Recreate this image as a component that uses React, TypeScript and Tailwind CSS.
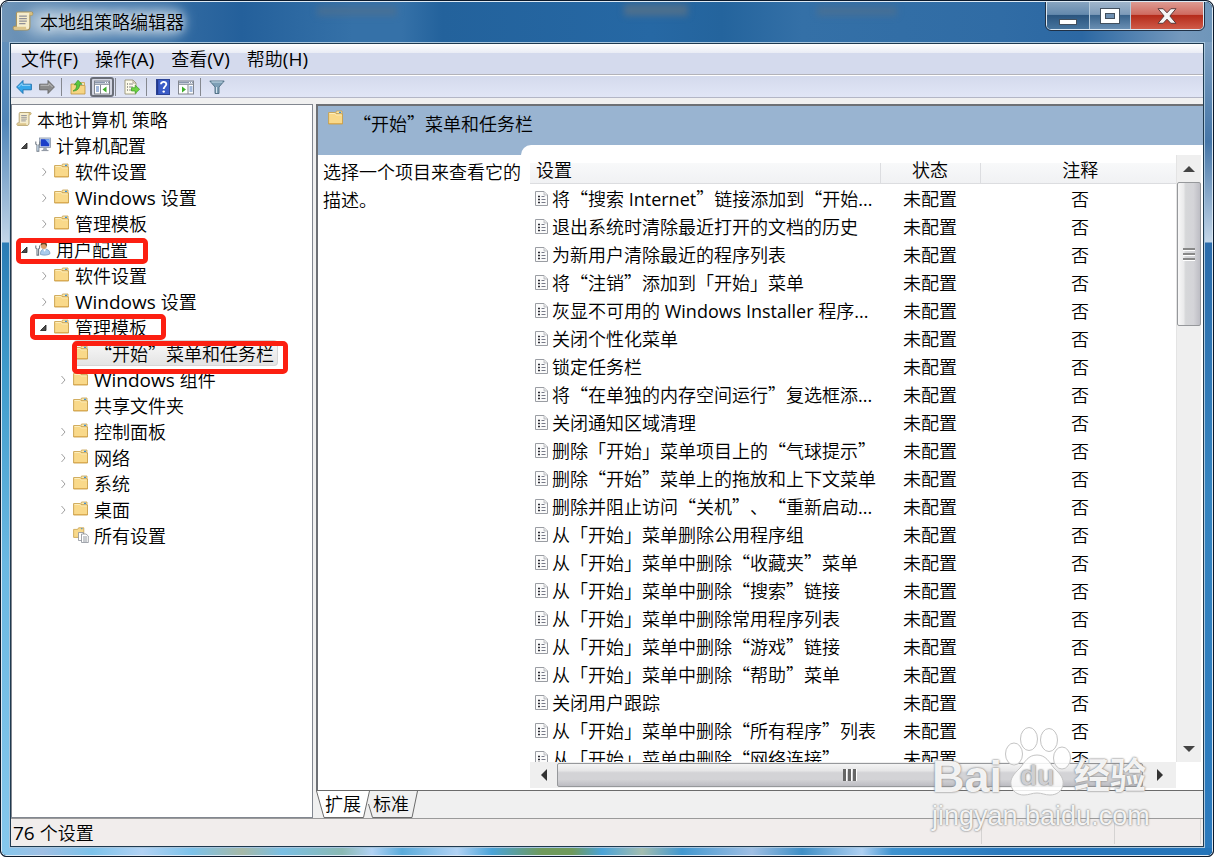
import type { ReactNode } from "react";
import clsx from "clsx";

const settings = [
  "将“搜索 Internet”链接添加到“开始...",
  "退出系统时清除最近打开的文档的历史",
  "为新用户清除最近的程序列表",
  "将“注销”添加到「开始」菜单",
  "灰显不可用的 Windows Installer 程序...",
  "关闭个性化菜单",
  "锁定任务栏",
  "将“在单独的内存空间运行”复选框添...",
  "关闭通知区域清理",
  "删除「开始」菜单项目上的“气球提示”",
  "删除“开始”菜单上的拖放和上下文菜单",
  "删除并阻止访问“关机”、“重新启动...",
  "从「开始」菜单删除公用程序组",
  "从「开始」菜单中删除“收藏夹”菜单",
  "从「开始」菜单中删除“搜索”链接",
  "从「开始」菜单中删除常用程序列表",
  "从「开始」菜单中删除“游戏”链接",
  "从「开始」菜单中删除“帮助”菜单",
  "关闭用户跟踪",
  "从「开始」菜单中删除“所有程序”列表",
  "从「开始」菜单中删除“网络连接”",
];

type Node = {
  label: string;
  icon?: "computer" | "user" | "all";
  arrow?: "open" | "closed";
  selected?: boolean;
  mark?: string;
  children?: Node[];
};

const tree: Node[] = [
  {
    label: "计算机配置",
    icon: "computer",
    arrow: "open",
    children: [
      { label: "软件设置", arrow: "closed" },
      { label: "Windows 设置", arrow: "closed" },
      { label: "管理模板", arrow: "closed" },
    ],
  },
  {
    label: "用户配置",
    icon: "user",
    arrow: "open",
    mark: "left-0 top-0.5 w-[132px] h-[26px]",
    children: [
      { label: "软件设置", arrow: "closed" },
      { label: "Windows 设置", arrow: "closed" },
      {
        label: "管理模板",
        arrow: "open",
        mark: "-left-[5px] top-0 w-[136px] h-[26px]",
        children: [
          { label: "“开始”菜单和任务栏", selected: true, mark: "left-[18px] top-px w-[216px] h-[33px]" },
          { label: "Windows 组件", arrow: "closed" },
          { label: "共享文件夹" },
          { label: "控制面板", arrow: "closed" },
          { label: "网络", arrow: "closed" },
          { label: "系统", arrow: "closed" },
          { label: "桌面", arrow: "closed" },
          { label: "所有设置", icon: "all" },
        ],
      },
    ],
  },
];

// Latin runs use a wider face than the one bundled with the CJK font
function Mixed({ text, large }: { text: string; large?: boolean }) {
  return (
    <span className="whitespace-pre">
      {text.split(/([A-Za-z0-9(). ]+)/).map((part, i) =>
        i % 2 ? (
          <span key={i} className={clsx("font-['Open_Sans','Noto_Sans',sans-serif] leading-none font-normal", large && "text-[19px]")}>
            {part}
          </span>
        ) : (
          part
        )
      )}
    </span>
  );
}

function ScrollIcon({ className }: { className?: string }) {
  return (
    <svg viewBox="0 0 16 16" className={clsx("shrink-0", className)}>
      <path d="M4 1.5h10.2c1.2 0 1.2 2.2 0 2.2H13V12c0 1.5-.6 2.5-2 2.5H2c-1.4 0-1.6-2.6 0-2.6h1.2V3c0-.8.2-1.5.8-1.5z" fill="#f6edcc" stroke="#a8935c" strokeWidth=".8" />
      <path d="M12.6 2v1.8h1.9c.8-.4.6-1.6-.3-1.8z" fill="#d9bf7c" />
      <path d="M2 12.2h8.3c-.3 1 .1 1.8.7 2H2c-1-.2-1-1.8 0-2z" fill="#dcc58c" />
      <path d="M5.2 4.5h5.6M5.2 6.3h5.6M5.2 8.1h5.6M5.2 9.9h4.6" stroke="#8f8f96" strokeWidth=".9" />
    </svg>
  );
}

function FolderIcon() {
  return (
    <svg viewBox="0 0 16 16" className="h-4 w-4 shrink-0">
      <path d="M7.500 3.500L8.500 1H14v3z" fill="#fbe9ae" stroke="#c79f4b" strokeWidth=".8" />
      <path d="M11 2.400h2" stroke="#3f8fd8" strokeWidth="1.200" />
      <path d="M.6 2.600h6.600l1.400 1.400h5.900v10H.6z" fill="#f9d98a" stroke="#c79f4b" strokeWidth=".9" />
      <path d="M1.400 3.500h5.500l1.400 1.400h5.400" stroke="#fdf0c4" strokeWidth=".9" fill="none" />
      <path d="M1 13.500h13.200" stroke="#dba94f" strokeWidth=".9" />
    </svg>
  );
}

function ComputerIcon() {
  return (
    <svg viewBox="0 0 16 16" className="h-4 w-4 shrink-0">
      <rect x="4.500" y="1" width="11" height="9.500" fill="#d9e0ea" stroke="#8492a6" strokeWidth=".8" />
      <rect x="5.700" y="2.200" width="8.600" height="7.100" fill="#1b3fc9" />
      <path d="M10 2.200h4.300v5z" fill="#7fb1f2" />
      <path d="M8.500 11h3l.8 2.200H7.600z" fill="#a3abb8" />
      <path d="M6.500 13.600h7" stroke="#8b929e" />
      <path d="M.8 4.500v2.600l1.200 1v6h1.800v-6l1-1V4.500" fill="none" stroke="#6e7884" strokeWidth="1.100" />
      <path d="M2.900 8.400v5.400" stroke="#b9d2e8" />
    </svg>
  );
}

function UserIcon() {
  return (
    <svg viewBox="0 0 16 16" className="h-4 w-4 shrink-0">
      <path d="M5.500 13.500c-.3-3.400 1.200-5.400 4.200-5.400 3.400 0 5.300 2 5.300 4.600-2 1.700-6.500 1.800-9.500.8z" fill="#a9cbec" stroke="#6f93b8" strokeWidth=".7" />
      <path d="M8 8.300l1.600 2.500 1.600-2.500z" fill="#fff" />
      <circle cx="8.800" cy="5" r="3" fill="#d9a06e" />
      <path d="M5.600 4.800C5.300 2 7.300.9 9.200 1c2 .1 3.200 1.800 2.700 4.200-.7 1-.9-1.500-2.200-1.900-1.700-.3-3 .1-4.100 1.500z" fill="#6a4326" />
      <path d="M.8 4.500v2.600l1.200 1v6h1.600v-6l1-1V4.500" fill="none" stroke="#6e7884" strokeWidth="1.100" />
    </svg>
  );
}

function AllIcon() {
  return (
    <svg viewBox="0 0 16 16" className="h-4 w-4 shrink-0">
      <path d="M.6 2.400h4l1-1.600h5.200v9.600H.6z" fill="#f8d98b" stroke="#c79f4b" strokeWidth=".8" />
      <path d="M8 1.700h1.500" stroke="#3f8fd8" />
      <path d="M5.500 5.500h5v8h-5z" fill="#fff" stroke="#8a8f98" strokeWidth=".8" />
      <path d="M8.500 7h4.500l2.300 2v6.500H8.500z" fill="#fff" stroke="#8a8f98" strokeWidth=".8" />
      <path d="M10 10h4M10 12h4M10 14h4" stroke="#777d88" strokeWidth=".8" />
    </svg>
  );
}

function DocIcon() {
  return (
    <svg viewBox="0 0 13 16" className="h-4 w-[13px] shrink-0">
      <path d="M.5 1.500h8.500l3.500 3.500v10.500H.5z" fill="#fbfbfb" stroke="#9a9da3" />
      <path d="M9 1.500V5h3.500" fill="#e8e8ea" stroke="#b1b4b9" strokeWidth=".8" />
      <path d="M3 6.500h2M3 9.500h2M3 12.500h2" stroke="#2b2b33" strokeWidth="1.600" />
      <path d="M6.500 6.500h3M6.500 9.500h4M6.500 12.500h4" stroke="#777a88" />
    </svg>
  );
}

function Arrow({ kind }: { kind?: "open" | "closed" }) {
  return (
    <svg viewBox="0 0 19 16" className="h-4 w-[19px] shrink-0">
      {kind === "open" && <path d="M11 6v5.500H5.500z" fill="#4a4a4a" stroke="#1e1e1e" strokeWidth=".8" />}
      {kind === "closed" && <path d="M7.500 5l3.500 4-3.500 4" fill="none" stroke="#a0a0a0" />}
    </svg>
  );
}

function TreeItem({ node }: { node: Node }) {
  return (
    <li>
      <div className="relative flex h-[26px] items-center">
        <Arrow kind={node.arrow} />
        <div
          className={clsx(
            "flex h-full items-center gap-[5px]",
            node.selected &&
              "rounded-sm bg-linear-to-b from-[#fafafa] to-[#e3e3e3] pr-1 outline outline-[#d6d6d6] -outline-offset-1"
          )}
        >
          {node.icon === "computer" ? <ComputerIcon /> : node.icon === "user" ? <UserIcon /> : node.icon === "all" ? <AllIcon /> : <FolderIcon />}
          <Mixed text={node.label} large />
        </div>
        {node.mark && <div className={clsx("absolute z-10 rounded-[5px] border-5 border-[#fc1f11]", node.mark)} />}
      </div>
      {node.children && (
        <ul className="pl-[19px]">
          {node.children.map((child, i) => (
            <TreeItem key={i} node={child} />
          ))}
        </ul>
      )}
    </li>
  );
}

function Separator() {
  return <div className="mr-2 ml-1.5 h-[18px] w-px bg-[#85888f]" />;
}

function ToolButton({ label, className, children }: { label: string; className?: string; children: ReactNode }) {
  return (
    <button aria-label={label} className={clsx("flex items-center justify-center", className)}>
      <svg viewBox="0 0 16 16" className="h-4 w-4">
        {children}
      </svg>
    </button>
  );
}

function PaneShape({ flip }: { flip?: boolean }) {
  return (
    <>
      <rect x=".5" y="2" width="15" height="13" fill="#fff" stroke="#83878f" />
      <path d="M1 3.500h14" stroke="#8b97ad" strokeWidth="2" />
      <path d="M11 3.500h1M13 3.500h1" stroke="#fff" />
      <path d="M1 5.500h14" stroke="#9aa0aa" />
      <path d={flip ? "M10 6v9" : "M6.500 6v9"} stroke="#83878f" />
      <path d={flip ? "M11.500 8h3M11.500 10h3M11.500 12h3" : "M2 8h3M2 10h3M2 12h3"} stroke="#4673b8" />
      <path d={flip ? "M4 7.500l4 3-4 3z" : "M12.500 7.500l-4 3 4 3z"} fill="#3fae2a" />
    </>
  );
}

function Toolbar() {
  return (
    <div className="flex h-[22px] items-center border-b border-[#b3b6c6] bg-linear-to-b from-[#d4daed] to-[#e1e6f6] pl-[5px]">
      <ToolButton label="后退">
        <path d="M.6 8l6.400-6.500v3.700h8.400v5.600H7v3.700z" fill="#35a7ea" stroke="#1c6fae" strokeWidth=".9" />
        <path d="M2.500 8l3.500-3.500v1.800h8.300" fill="none" stroke="#a5dcfa" strokeWidth=".9" />
      </ToolButton>
      <ToolButton label="前进" className="ml-[7px]">
        <path d="M15.400 8l-6.400-6.500v3.700H.6v5.600H9v3.700z" fill="#8b8b8b" stroke="#636363" strokeWidth=".9" />
        <path d="M1.500 6.300h8.500V4.500l3.500 3.500" fill="none" stroke="#c2c2c2" strokeWidth=".9" />
      </ToolButton>
      <Separator />
      <ToolButton label="上一级">
        <path d="M1 5h5l1.500 1.500H15V15H1z" fill="#f6d583" stroke="#bf9640" strokeWidth=".8" />
        <path d="M10 3.500h4.500v3" fill="#fbe9ae" stroke="#c79f4b" strokeWidth=".8" />
        <path d="M3 12c2.500-1 3.800-3.200 3.700-6.200H4.400L8 1.200l4 4.100H9.600C9.700 9.500 7 12 3 12z" fill="#5cc93e" stroke="#32902a" strokeWidth=".7" />
      </ToolButton>
      <ToolButton label="显示/隐藏控制台树" className="-mr-[5px] ml-1 h-5 w-6 rounded-[3px] border-2 border-[#6a6e78] bg-[#d3d6e2]">
        <PaneShape />
      </ToolButton>
      <Separator />
      <ToolButton label="导出列表">
        <path d="M1 1h8l3 3v11H1z" fill="#fdfbea" stroke="#9a9578" strokeWidth=".9" />
        <path d="M9 1v3h3" fill="none" stroke="#9a9578" strokeWidth=".8" />
        <path d="M3 5h1M3 8h1M3 11h1" stroke="#444" strokeWidth="1.200" />
        <path d="M5 5h4M5 8h4M5 11h3" stroke="#8b8b8b" />
        <path d="M7.500 8.700h3.700V6.200l4.400 4.100-4.400 4.200V12H7.500z" fill="#6fd443" stroke="#3b9c27" strokeWidth=".7" />
      </ToolButton>
      <Separator />
      <ToolButton label="帮助">
        <rect x="1.500" y=".5" width="13" height="15" fill="#3a5bc7" stroke="#2b4396" />
        <path d="M2.500 1v14" stroke="#24398a" strokeWidth="1.500" />
        <path d="M6 5.200c0-3.300 5.500-3 5.300.1-.1 2-2.600 2.200-2.600 4.700" fill="none" stroke="#fff" strokeWidth="1.900" />
        <circle cx="8.700" cy="12.600" r="1.200" fill="#fff" />
      </ToolButton>
      <ToolButton label="显示/隐藏操作窗格" className="ml-[7px]">
        <PaneShape flip />
      </ToolButton>
      <Separator />
      <ToolButton label="筛选器">
        <path d="M.8 2h14.400L10 8v6.500H6V8z" fill="#7d9fb6" stroke="#4c6b80" strokeWidth=".9" />
        <path d="M2.500 3h11" stroke="#c6dbe8" strokeWidth="1.200" />
        <path d="M7.500 8v6" stroke="#d4e4ee" />
      </ToolButton>
    </div>
  );
}

function TitleBar() {
  return (
    <div className="relative flex h-10 shrink-0 items-start justify-between overflow-hidden bg-[linear-gradient(to_right,#7095b8_0px,#3f74a8_110px,#24609b_240px,#3571a8_350px,#3571a8_400px,#23629c_440px,#2668a4_650px,#24649d_720px,#3470a7_800px,#306ca5_1000px,#2c68a3_1080px,#7599bd_1180px,#6f96ba_100%)]">
      <div className="absolute top-1 left-[315px] h-2.5 w-20 bg-[#526f8c]/60 blur-[3px]" />
      <div className="absolute top-0.5 left-[622px] h-3 w-16 bg-[#5d7285]/70 blur-[3px]" />
      <div className="absolute top-1 left-[815px] h-2.5 w-20 bg-[#526f8c]/60 blur-[3px]" />
      <div className="relative flex h-full items-center gap-1.5 pb-0.5 pl-2.5">
        <div className="absolute inset-y-1.5 right-0 left-6 rounded-full bg-[#c9d8e6]/70 blur-[7px]" />
        <ScrollIcon className="relative h-[22px] w-[22px]" />
        <h1 className="relative font-[350] [text-shadow:0_0_8px_#fff]">本地组策略编辑器</h1>
      </div>
      <div className="mr-2 flex h-7 overflow-hidden rounded-b-[5px] border border-t-0 border-[#dce8f2] outline outline-[#1f3045]">
        <button aria-label="最小化" className="flex w-[43px] items-center justify-center border-r border-[#b5cadb] bg-[linear-gradient(#87a4c0_0%,#6489ad_46%,#2b557f_50%,#47749d_100%)]">
          <span className="mt-3 h-[6px] w-[18px] border border-[#43505e] bg-white" />
        </button>
        <button aria-label="最大化" className="flex w-[41px] items-center justify-center border-r border-[#b5cadb] bg-[linear-gradient(#a0b5cb_0%,#7e9bb9_46%,#3a638b_50%,#6a8fb3_100%)]">
          <span className="h-4 w-5 border border-[#43505e] bg-white p-1">
            <span className="block h-full border border-[#43505e] bg-[#6f8fb0]" />
          </span>
        </button>
        <button aria-label="关闭" className="flex w-[72px] items-center justify-center bg-[linear-gradient(#dd9b92_0%,#cf6b60_46%,#b52c1b_50%,#cf5a48_100%)]">
          <svg viewBox="0 0 20 16" className="h-4 w-5">
            <path d="M1 .700h5.200L10 4.800 13.800.700H19L12.900 8l6.100 7.300h-5.200L10 11.200l-3.800 4.100H1L7.100 8z" fill="#f6f6f6" stroke="#5b3a3a" />
          </svg>
        </button>
      </div>
    </div>
  );
}

function Tab({ label, active }: { label: string; active?: boolean }) {
  return (
    <button className={clsx("relative h-[27px] w-[54px]", !active && "-ml-1.5")}>
      <svg viewBox="0 0 54 27" className="absolute inset-0 h-full w-full">
        <path d={active ? "M0 0l8 26.500h39.500L54 0z" : "M7 0L4.500 13 8.500 26.500h39.500L53.500 0z"} fill={active ? "#fff" : "#f0f0f0"} />
        <path d={active ? "M.5 0l7.500 26.500h39.500L53.500 0" : "M4.500 13l4 13.500h39.500L53.500 0"} fill="none" stroke="#6b6b6b" />
      </svg>
      <span className="relative block pb-0.5 leading-[25px]">{label}</span>
    </button>
  );
}

function VerticalScroll() {
  return (
    <div className="mr-0.5 flex w-[25px] shrink-0 flex-col border-l border-[#e4e4e4] bg-[#efefef]">
      <div className="flex h-[27px] items-center justify-center">
        <svg viewBox="0 0 12 6" className="h-1.5 w-3"><path d="M6 0l6 6H0z" fill="#444" /></svg>
      </div>
      <div className="flex h-36 flex-col items-center justify-center gap-0.5 rounded-xs border border-[#96989b] bg-[linear-gradient(to_right,#f7f7f7,#ebebec_25%,#d6d7d9_35%,#d4d4d8_70%,#bdbdc4)]">
        <span className="h-[3px] w-3 border-b border-white bg-[#888]" />
        <span className="h-[3px] w-3 border-b border-white bg-[#888]" />
        <span className="h-[3px] w-3 border-b border-white bg-[#888]" />
      </div>
      <div className="mt-auto flex h-[27px] items-center justify-center">
        <svg viewBox="0 0 12 6" className="h-1.5 w-3"><path d="M0 0h12L6 6z" fill="#444" /></svg>
      </div>
    </div>
  );
}

function HorizontalScroll() {
  return (
    <div className="mr-[27px] flex h-[26px] shrink-0 bg-[#efefef]">
      <div className="flex w-[27px] items-center justify-center">
        <svg viewBox="0 0 6 12" className="h-3 w-1.5"><path d="M6 0v12L0 6z" fill="#333" /></svg>
      </div>
      <div className="my-px flex flex-1 items-center justify-center gap-px rounded-xs border border-[#96989b] bg-[linear-gradient(#f4f4f4,#e6e6e7_30%,#d3d3d6_40%,#d3d3d6_70%,#bcbcc2)]">
        <span className="h-3 w-1 border-r border-white bg-[#666]" />
        <span className="h-3 w-1 border-r border-white bg-[#666]" />
        <span className="h-3 w-1 border-r border-white bg-[#666]" />
      </div>
      <div className="flex w-[33px] items-center justify-center">
        <svg viewBox="0 0 6 12" className="h-3 w-1.5"><path d="M0 0v12l6-6z" fill="#333" /></svg>
      </div>
    </div>
  );
}

function HeadLabel({ label }: { label: string }) {
  return <div className="-mt-2 h-7 leading-7">{label}</div>;
}

function SettingsTable() {
  return (
    <div className="min-w-0 flex-1 overflow-hidden pt-2">
      <table className="w-full table-fixed border-collapse">
        <thead>
          <tr className="bg-linear-to-b from-[#f8f9fa] to-[#f0f1f3]">
            <th className="w-[350px] border-r border-b border-[#dcdde0] p-0 pl-1.5 text-left font-[350]"><HeadLabel label="设置" /></th>
            <th className="w-[100px] border-r border-b border-[#dcdde0] p-0 text-center font-[350]"><HeadLabel label="状态" /></th>
            <th className="border-b border-[#dcdde0] p-0 pl-1 text-center font-[350]"><HeadLabel label="注释" /></th>
          </tr>
        </thead>
        <tbody>
          {settings.map((name) => (
            <tr key={name} className="h-7">
              <td className="p-0 pl-[5px]">
                <div className="flex h-7 items-center gap-1">
                  <DocIcon />
                  <Mixed text={name} />
                </div>
              </td>
              <td className="p-0 text-center">未配置</td>
              <td className="p-0 pl-1 text-center">否</td>
            </tr>
          ))}
        </tbody>
      </table>
    </div>
  );
}

function ResultPane() {
  return (
    <main className="flex min-w-0 flex-1 flex-col">
      <div className="flex min-h-0 flex-1 flex-col border-t-2 border-l-2 border-[#6d7075]">
        <div className="flex h-[39px] shrink-0 items-start bg-[#99b4d1] pt-1 pl-2.5">
          <FolderIcon />
          <h2 className="ml-[9px] leading-[26px] font-[350]">“开始”菜单和任务栏</h2>
        </div>
        <div className="flex min-h-0 flex-1 bg-[#99b4d1]">
          <div className="w-[203px] shrink-0 pt-2.5">
            <p className="h-full bg-white pt-0.5 pl-[5px] leading-7">选择一个项目来查看它的描述。</p>
          </div>
          <div className="flex min-w-0 flex-1 flex-col rounded-tl-[10px] bg-white pt-2.5 pb-0.5 pl-[9px]">
            <div className="flex min-h-0 flex-1">
              <SettingsTable />
              <VerticalScroll />
            </div>
            <HorizontalScroll />
          </div>
        </div>
      </div>
      <div className="flex h-7 border-t border-[#6b6b6b] bg-[#f0f0f0]">
        <Tab label="扩展" active />
        <Tab label="标准" />
      </div>
    </main>
  );
}

function Watermark() {
  return (
    <div className="pointer-events-none absolute right-[63px] bottom-6 w-[218px] font-['Liberation_Sans','Noto_Sans_CJK_SC',sans-serif] text-white/90 [text-shadow:0_0_2px_#777,0_0_2px_#aaa]">
      <div className="flex h-[74px] items-end font-bold">
        <span className="text-[45px] leading-[46px]">Bai</span>
        <div className="relative mx-0.5 h-[74px] w-[68px]">
          <svg viewBox="0 0 68 74" className="h-full w-full" fill="#fff" fillOpacity=".85" stroke="#c4c4c4">
            <ellipse cx="10" cy="28" rx="8.500" ry="11" />
            <ellipse cx="25" cy="13" rx="8.500" ry="11.500" />
            <ellipse cx="45" cy="14" rx="8.500" ry="11.500" />
            <ellipse cx="58" cy="32" rx="8.500" ry="11" />
            <path d="M33 29c9 0 12 7 17 13 6 6 10 10 9 17-1 6-6 10-13 10-5 0-8-2-13-2s-8 2-13 2c-7 0-12-4-13-10-1-7 3-11 9-17 5-6 8-13 17-13z" />
          </svg>
          <span className="absolute top-9 left-4 text-[28px] leading-7 text-[#cfcfd2]">du</span>
        </div>
        <span className="text-[36px] leading-[46px]">经验</span>
      </div>
      <div className="text-[27px] leading-8">jingyan.baidu.com</div>
    </div>
  );
}

export default function App() {
  return (
    <div className="relative h-screen overflow-hidden rounded-t-lg rounded-b-md border border-[#0c1a2c] bg-[#0c1a2c] font-['Noto_Sans_CJK_SC',sans-serif] text-[18px] leading-[26px] font-[350] text-black [text-spacing-trim:space-all]">
      <div className="flex h-full flex-col overflow-hidden rounded-t-[7px] rounded-b-[5px] border border-[#dce9f4]">
        <TitleBar />
        <div className="flex min-h-0 flex-1">
          <div className="w-[7px] bg-[linear-gradient(#6390bb_0px,#4f85b8_80px,#c3d6e8_200px,#2b7cb5_201px,#3f9bcb_330px,#6ab8e2_520px,#85c7ec_100%)]" />
          <div className="min-w-0 flex-1 border border-[#a9c6dd]">
            <div className="flex h-full flex-col border border-[#1f3a50] bg-[#f0f0f0]">
              <nav className="flex h-[31px] shrink-0 items-center gap-[17px] border-b border-[#b3b3b9] bg-[linear-gradient(#fff_0px,#e9ecf5_9px,#d4daed_9px)] pb-0.5 pl-2.5">
                {["文件(F)", "操作(A)", "查看(V)", "帮助(H)"].map((item) => (
                  <button key={item}>
                    <Mixed text={item} large />
                  </button>
                ))}
              </nav>
              <div className="shrink-0 border-t border-white">
                <Toolbar />
              </div>
              <div className="flex min-h-0 flex-1 gap-[3px] pt-1.5">
                <aside className="w-[302px] shrink-0 border border-[#828790] bg-white pt-px pl-1">
                  <div className="flex h-[26px] items-center gap-[5px]">
                    <ScrollIcon className="h-4 w-4" />
                    <Mixed text="本地计算机 策略" />
                  </div>
                  <ul>
                    {tree.map((node) => (
                      <TreeItem key={node.label} node={node} />
                    ))}
                  </ul>
                </aside>
                <ResultPane />
              </div>
              <footer className="flex h-7 shrink-0 items-stretch border-t border-[#9a9a9a] bg-[#f1edec] pb-0.5">
                <div className="flex-1 border-r border-[#d5d3d2] pl-0.5">
                  <Mixed text="76 个设置" large />
                </div>
                <div className="w-[133px] border-r border-[#d5d3d2]" />
                <div className="mr-0.5 w-[86px] border-r border-[#d5d3d2]" />
              </footer>
            </div>
          </div>
          <div className="w-[7px] bg-[linear-gradient(#7d9fc1_0px,#4576a8_100px,#c3d6e8_200px,#2b6cab_201px,#3584c0_450px,#2a79bd_100%)]" />
        </div>
        <div className="h-[7px] shrink-0 bg-[linear-gradient(to_right,#85c7ec_0px,#9fbfe4_40px,#7cc2ea_90px,#b1d2f4_140px,#7cc2ea_190px,#a6b9a8_240px,#7abfe4_280px,#8ab9b4_340px,#b1d2f4_370px,#5aabdb_400px,#b1d2f4_455px,#4aa3d8_490px,#6f9a5c_540px,#6f9a5c_570px,#4aa3d8_600px,#a3bdb0_640px,#4298d0_680px,#9fbfe4_750px,#3f8fc6_800px,#aed0f2_860px,#3f93d0_890px,#2a79bd_1000px,#2474b9_100%)]" />
      </div>
      <Watermark />
    </div>
  );
}
